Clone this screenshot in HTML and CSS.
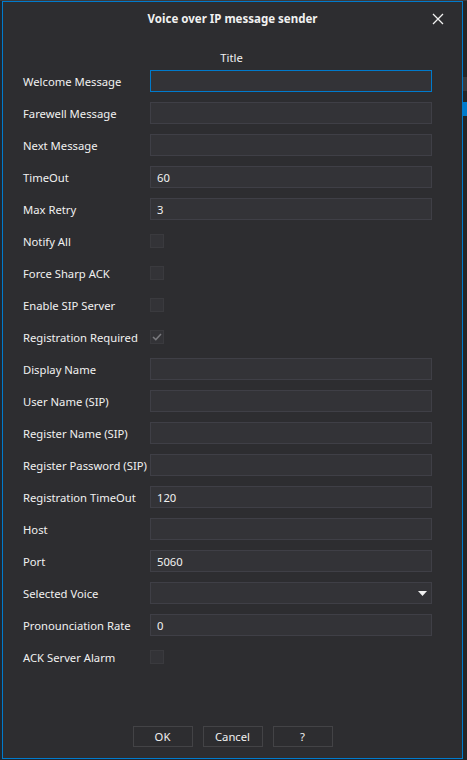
FILE: index.html
```html
<!DOCTYPE html>
<html>
<head>
<meta charset="utf-8">
<link rel="stylesheet" href="styles.css">
</head>
<body>
<div class="screen">
  <div class="dialog">
    <div class="titlebar">
      <span class="caption">Voice over IP message sender</span>
      <svg class="close" width="12" height="12" viewBox="0 0 12 12"><path d="M1 1L11 11M11 1L1 11" stroke="#f1f1f1" stroke-width="1.3" fill="none"/></svg>
    </div>
    <div class="content">
      <div class="heading">Title</div>
      <div class="form">
        <label>Welcome Message</label><div class="input focus"></div>
        <label>Farewell Message</label><div class="input"></div>
        <label>Next Message</label><div class="input"></div>
        <label>TimeOut</label><div class="input">60</div>
        <label>Max Retry</label><div class="input">3</div>
        <label>Notify All</label><div class="cell"><span class="check"></span></div>
        <label>Force Sharp ACK</label><div class="cell"><span class="check"></span></div>
        <label>Enable SIP Server</label><div class="cell"><span class="check"></span></div>
        <label>Registration Required</label><div class="cell"><span class="check on"><svg width="10" height="8" viewBox="0 0 10 8"><path d="M1 4L3.8 6.6L9 1" stroke="#7a7a7e" stroke-width="1.5" fill="none"/></svg></span></div>
        <label>Display Name</label><div class="input"></div>
        <label>User Name (SIP)</label><div class="input"></div>
        <label>Register Name (SIP)</label><div class="input"></div>
        <label>Register Password (SIP)</label><div class="input"></div>
        <label>Registration TimeOut</label><div class="input">120</div>
        <label>Host</label><div class="input"></div>
        <label>Port</label><div class="input">5060</div>
        <label>Selected Voice</label><div class="input select"><svg width="9" height="5" viewBox="0 0 9 5"><path d="M0 0H9L4.5 5Z" fill="#f1f1f1"/></svg></div>
        <label>Pronounciation Rate</label><div class="input">0</div>
        <label>ACK Server Alarm</label><div class="cell"><span class="check"></span></div>
      </div>
    </div>
    <div class="footer">
      <button class="btn">OK</button>
      <button class="btn">Cancel</button>
      <button class="btn">?</button>
    </div>
  </div>
  <div class="side">
    <span class="side-a"></span>
    <span class="side-b"></span>
  </div>
</div>
</body>
</html>
```
FILE: styles.css
```css
html, body {
  margin: 0;
  padding: 0;
}
body {
  width: 467px;
  height: 760px;
  overflow: hidden;
  background: #1f2730;
  font-family: "Noto Sans", "Open Sans", sans-serif;
  font-size: 11.25px;
  color: #f1f1f1;
}
.screen {
  display: flex;
  padding: 1px 0 0 2px;
  height: 759px;
  background: linear-gradient(#3a3a3c 0 1px, transparent 1px);
}
.dialog {
  width: 459px;
  height: 756px;
  border: 1px solid #007acc;
  background: #2d2d30;
  display: flex;
  flex-direction: column;
}
.titlebar {
  height: 32px;
  position: relative;
  display: flex;
  align-items: center;
  justify-content: center;
}
.caption {
  font-weight: bold;
  font-size: 11.5px;
}
.close {
  position: absolute;
  right: 18px;
  top: 11px;
}
.content {
  flex: 1;
  padding: 0 30px 0 20px;
}
.heading {
  height: 14px;
  padding-top: 17px;
  line-height: 14px;
  text-align: center;
  padding-left: 8px;
}
.form {
  display: grid;
  grid-template-columns: 127px 282px;
  grid-auto-rows: 32px;
  align-items: center;
}
.form label {
  white-space: nowrap;
}
.input {
  height: 20px;
  border: 1px solid #3f3f46;
  background: #333337;
  box-sizing: content-box;
  padding: 0 6px;
  display: flex;
  align-items: center;
  width: 268px;
}
.input.focus {
  border-color: #007acc;
}
.select {
  justify-content: flex-end;
  padding-right: 4px;
  width: 270px;
}
.cell {
  display: flex;
  align-items: center;
}
.check {
  width: 12px;
  height: 12px;
  border: 1px solid #3a3a3e;
  background: #333337;
  display: flex;
  align-items: center;
  justify-content: center;
}
.footer {
  display: flex;
  justify-content: center;
  gap: 10px;
  padding: 0 0 11px 0;
}
.btn {
  width: 60px;
  height: 21px;
  border: 1px solid #434346;
  background: #2d2d30;
  color: #f1f1f1;
  font-family: inherit;
  font-size: 11.25px;
  padding: 0;
}
.side {
  width: 4px;
  display: flex;
  flex-direction: column;
  background: #252526;
}
.side-a {
  margin-top: 76px;
  height: 14px;
  background: #3a3a3c;
}
.side-b {
  margin-top: 11px;
  height: 14px;
  background: #007acc;
}
```
